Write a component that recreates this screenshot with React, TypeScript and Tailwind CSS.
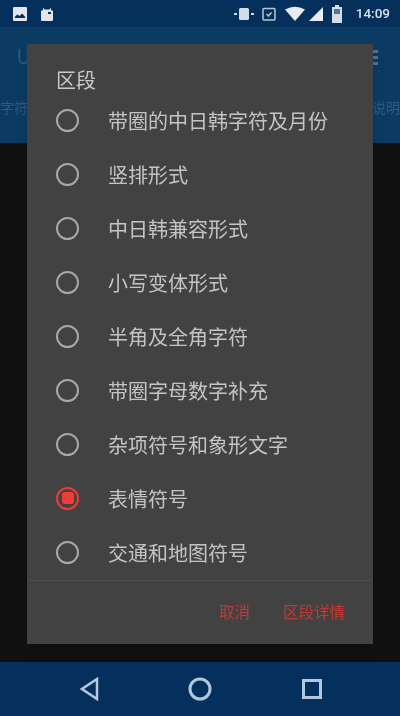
import React from "react";

const sections = [
  "带圈的中日韩字符及月份",
  "竖排形式",
  "中日韩兼容形式",
  "小写变体形式",
  "半角及全角字符",
  "带圈字母数字补充",
  "杂项符号和象形文字",
  "表情符号",
  "交通和地图符号",
];

const selected = "表情符号";
const fontStack = "font-['Roboto','Noto_Sans_CJK_SC',sans-serif]";

function StatusBar() {
  return (
    <div className="flex h-[27px] items-center bg-[#05305c] pl-[12px] pr-[10px]">
      <svg width="16" height="16" viewBox="0 0 16 16" className="text-[#dfe6ee]">
        <rect x="1" y="1" width="14" height="14" rx="1" fill="currentColor" />
        <path d="M3 10.500l2.500-2 2 1.500 2.500-2.500 3 3V12H3z" fill="#05305c" />
      </svg>
      <svg width="16" height="16" viewBox="0 0 16 16" className="ml-[11px] text-[#dfe6ee]">
        <path d="M4 1.500l1.500 2h5l1.500-2v2.500l2 1v9a1 1 0 01-1 1H3a1 1 0 01-1-1V5l2-1z" fill="currentColor" />
        <rect x="9" y="6" width="3" height="2" fill="#05305c" />
      </svg>
      <div className="flex-1" />
      <svg width="22" height="14" viewBox="0 0 22 14" className="text-[#d5dee8]">
        <rect x="6" y="1" width="10" height="12" rx="1.500" fill="currentColor" />
        <rect x="1" y="6" width="3" height="2" fill="currentColor" />
        <rect x="18" y="6" width="3" height="2" fill="currentColor" />
      </svg>
      <svg width="16" height="16" viewBox="0 0 16 16" fill="none" stroke="#b9c6d6" strokeWidth="1.500" className="ml-[6px]">
        <rect x="2" y="2.500" width="12" height="11.500" rx="1" />
        <path d="M5.500 8l2 2 3-3.500" />
      </svg>
      <svg width="20" height="16" viewBox="0 0 20 16" className="ml-[8px] text-[#e8edf3]">
        <path d="M0 3.500Q10-2 20 3.500L10 15z" fill="currentColor" />
      </svg>
      <svg width="16" height="16" viewBox="0 0 16 16" className="ml-[3px] text-[#e8edf3]">
        <path d="M15 1v14H1z" fill="currentColor" />
      </svg>
      <svg width="12" height="18" viewBox="0 0 12 18" className="ml-[7px] text-[#d5dee8]">
        <path d="M4 0h4v2h3v16H1V2h3z" fill="currentColor" />
        <rect x="3" y="4" width="6" height="5" fill="#05305c" opacity="0.6" />
      </svg>
      <span className={`ml-[13px] text-[13.500px] font-medium leading-none text-[#d8e0e9] ${fontStack}`}>14:09</span>
    </div>
  );
}

function Toolbar() {
  return (
    <div className={`h-[116px] bg-[#0b3a63] ${fontStack}`}>
      <div className="flex h-[60px] items-center justify-between pl-[17px] pr-[22px]">
        <span className="text-[20px] text-[#2f5a80]">U</span>
        <div className="flex flex-col gap-[3px]">
          <span className="h-[3px] w-[5px] bg-[#4b7092]" />
          <span className="h-[3px] w-[5px] bg-[#4b7092]" />
          <span className="h-[3px] w-[5px] bg-[#4b7092]" />
        </div>
      </div>
      <div className="flex justify-between pt-[11px] text-[14px] text-[#2f5a80]">
        <span>字符</span>
        <span>说明</span>
      </div>
    </div>
  );
}

function Radio({ checked }: { checked: boolean }) {
  return (
    <span
      className={`flex h-[23px] w-[23px] shrink-0 items-center justify-center rounded-full border-[2.500px] ${
        checked ? "border-[#ef3a36]" : "border-[#a8a8a8]"
      }`}
    >
      {checked && <span className="h-[12px] w-[12px] rounded-[3px] bg-[#f23c38]" />}
    </span>
  );
}

function SectionDialog() {
  return (
    <div className={`absolute left-[27px] top-[44px] flex h-[600px] w-[346px] flex-col bg-[#424242] shadow-lg ${fontStack}`}>
      <h2 className="pl-[29px] pt-[25px] text-[20px] leading-[24px] text-[#c9c9c9]">区段</h2>
      <ul className="flex flex-col">
        {sections.map((name) => (
          <li key={name} className="flex h-[54px] items-center pl-[29px]">
            <Radio checked={name === selected} />
            <span className="ml-[29px] pt-[3px] text-[20px] leading-none text-[#c4c4c4]">{name}</span>
          </li>
        ))}
      </ul>
      <div className="mt-[1px] border-t border-[#4d4d4d]" />
      <div className="flex flex-1 items-center justify-end gap-[33px] pt-[3px] pr-[28px] text-[15.500px] text-[#c23a36]">
        <button type="button">取消</button>
        <button type="button">区段详情</button>
      </div>
    </div>
  );
}

function NavBar() {
  return (
    <div className="flex h-[54px] items-center bg-[#052f5c] pl-[80px]">
      <svg width="20" height="24" viewBox="0 0 20 24" fill="none" stroke="#b4c7dc" strokeWidth="2.500">
        <path d="M17 2v20L2 12z" />
      </svg>
      <svg width="24" height="24" viewBox="0 0 24 24" fill="none" stroke="#b4c7dc" strokeWidth="3" className="ml-[88px]">
        <circle cx="12" cy="12" r="10" />
      </svg>
      <svg width="20" height="20" viewBox="0 0 20 20" fill="none" stroke="#b4c7dc" strokeWidth="3" className="ml-[90px]">
        <rect x="1.500" y="1.500" width="17" height="17" />
      </svg>
    </div>
  );
}

export default function App() {
  return (
    <div className="relative flex h-[716px] w-[400px] flex-col overflow-hidden bg-[#111111] blur-[0.7px]">
      <StatusBar />
      <Toolbar />
      <div className="flex-1" />
      <NavBar />
      <SectionDialog />
    </div>
  );
}
